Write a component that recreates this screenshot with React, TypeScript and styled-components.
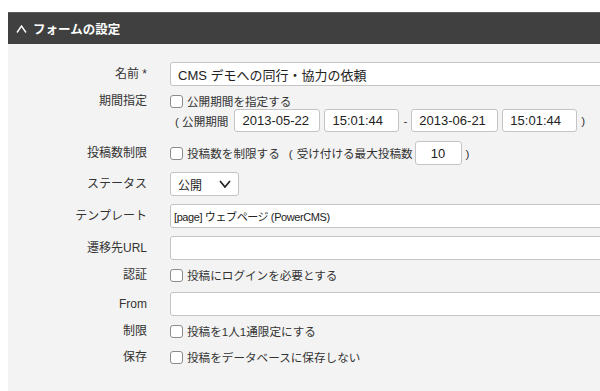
import React from "react";
import styled, { createGlobalStyle } from "styled-components";

const GlobalStyle = createGlobalStyle`
  html, body {
    margin: 0;
    padding: 0;
    background: #ffffff;
    overflow: hidden;
  }
  body {
    font-family: "Liberation Sans", "Noto Sans CJK JP", sans-serif;
    color: #333333;
  }
`;

const Page = styled.div`
  width: 100%;
  overflow: hidden;
  padding: 12px 0 0 8px;
  box-sizing: border-box;
`;

const Sheet = styled.div`
  width: 720px;
`;

const Header = styled.div`
  height: 32px;
  box-sizing: border-box;
  background: #404040;
  border-top: 1px solid #5a5a5a;
  color: #ffffff;
  display: flex;
  align-items: center;
  gap: 6px;
  padding-left: 8px;
  font-family: "Noto Sans CJK JP", sans-serif;
  font-weight: 700;
  font-size: 12.5px;
`;

const Caret = styled.svg`
  width: 11px;
  height: 8px;
  display: block;
`;

const Panel = styled.div`
  background: #f3f3f3;
  padding: 18px 0 40px;
  display: flex;
  flex-direction: column;
`;

const Row = styled.div<{ $top: number; $align?: string }>`
  display: grid;
  grid-template-columns: 139px 1fr;
  column-gap: 23px;
  align-items: ${(p) => p.$align ?? "center"};
  margin-top: ${(p) => p.$top}px;
`;

const Label = styled.div<{ $lh?: number }>`
  text-align: right;
  font-size: 12px;
  line-height: ${(p) => p.$lh ?? 16}px;
  color: #333;
`;

const Field = styled.div`
  display: flex;
  flex-direction: column;
  min-width: 0;
`;

const Line = styled.div<{ $h: number }>`
  display: flex;
  align-items: center;
  height: ${(p) => p.$h}px;
  font-size: 11.6px;
  color: #333;
  white-space: nowrap;
`;

const TextBox = styled.input<{ $w?: number; $h?: number; $center?: boolean; $fs?: number }>`
  box-sizing: border-box;
  width: ${(p) => (p.$w ? `${p.$w}px` : "100%")};
  height: ${(p) => p.$h ?? 24}px;
  border: 1px solid #c4c4c4;
  border-radius: 3px;
  background: #ffffff;
  padding: 0 ${(p) => (p.$center ? 0 : 7)}px;
  margin: 0;
  font-family: "Liberation Sans", "Noto Sans CJK JP", sans-serif;
  font-size: ${(p) => p.$fs ?? 13}px;
  color: #222;
  text-align: ${(p) => (p.$center ? "center" : "left")};
  outline: none;
  flex: none;
`;

const Check = styled.span`
  box-sizing: border-box;
  width: 13px;
  height: 13px;
  border: 1px solid #8c8c8c;
  border-radius: 3px;
  background: #ffffff;
  flex: none;
  margin-right: 4px;
`;

const Paren = styled.span<{ $ml?: number; $mr?: number }>`
  margin-left: ${(p) => p.$ml ?? 0}px;
  margin-right: ${(p) => p.$mr ?? 0}px;
`;

const DateLine = styled.div`
  display: flex;
  align-items: center;
  gap: 4px;
  height: 23px;
  font-size: 11.6px;
  color: #333;
  white-space: nowrap;
  padding-left: 5px;
`;

const DateLead = styled.span`
  margin-right: 2px;
`;

const Select = styled.div<{ $w?: number; $fs?: number; $pl?: number; $ls?: number }>`
  box-sizing: border-box;
  width: ${(p) => (p.$w ? `${p.$w}px` : "100%")};
  height: 24px;
  border: 1px solid #c4c4c4;
  border-radius: 3px;
  background: #ffffff;
  display: flex;
  align-items: center;
  justify-content: space-between;
  padding: 0 7px 0 ${(p) => p.$pl ?? 7}px;
  font-size: ${(p) => p.$fs ?? 12}px;
  letter-spacing: ${(p) => p.$ls ?? 0}px;
  color: #222;
  white-space: nowrap;
`;

const Chevron = styled.svg`
  width: 12px;
  height: 8px;
  display: block;
`;

function CheckLine({ text }: { text: string }) {
  return (
    <Line $h={18}>
      <Check />
      <span>{text}</span>
    </Line>
  );
}

export default function App() {
  return (
    <>
      <GlobalStyle />
      <Page>
        <Sheet>
          <Header>
            <Caret viewBox="0 0 11 8">
              <polyline points="1,7.5 5.5,1 10,7.5" fill="none" stroke="#fff" strokeWidth="1.4" />
            </Caret>
            <span>フォームの設定</span>
          </Header>
          <Panel>
            <Row $top={0}>
              <Label>名前 *</Label>
              <TextBox readOnly value="CMS デモへの同行・協力の依頼" />
            </Row>
            <Row $top={7} $align="start">
              <Label $lh={16}>期間指定</Label>
              <Field>
                <Line $h={16}>
                  <Check />
                  <span>公開期間を指定する</span>
                </Line>
                <DateLine>
                  <DateLead>( 公開期間</DateLead>
                  <TextBox readOnly value="2013-05-22" $w={86} $h={23} />
                  <TextBox readOnly value="15:01:44" $w={75} $h={23} />
                  <span>-</span>
                  <TextBox readOnly value="2013-06-21" $w={87} $h={23} />
                  <TextBox readOnly value="15:01:44" $w={75} $h={23} />
                  <span>)</span>
                </DateLine>
              </Field>
            </Row>
            <Row $top={9}>
              <Label>投稿数制限</Label>
              <Line $h={24}>
                <Check />
                <span>投稿数を制限する</span>
                <Paren $ml={9} $mr={4}>(</Paren>
                <span>受け付ける最大投稿数</span>
                <Paren $ml={2}>
                  <TextBox readOnly value="10" $w={47} $center />
                </Paren>
                <Paren $ml={4}>)</Paren>
              </Line>
            </Row>
            <Row $top={7}>
              <Label>ステータス</Label>
              <Select $w={69}>
                <span>公開</span>
                <Chevron viewBox="0 0 12 8">
                  <polyline points="1,1 6,7 11,1" fill="none" stroke="#222" strokeWidth="1.7" />
                </Chevron>
              </Select>
            </Row>
            <Row $top={8}>
              <Label>テンプレート</Label>
              <Select $fs={11} $pl={3} $ls={-0.4}>
                <span>[page] ウェブページ (PowerCMS)</span>
              </Select>
            </Row>
            <Row $top={8}>
              <Label>遷移先URL</Label>
              <TextBox readOnly value="" />
            </Row>
            <Row $top={6}>
              <Label>認証</Label>
              <CheckLine text="投稿にログインを必要とする" />
            </Row>
            <Row $top={8}>
              <Label>From</Label>
              <TextBox readOnly value="" />
            </Row>
            <Row $top={6}>
              <Label>制限</Label>
              <CheckLine text="投稿を1人1通限定にする" />
            </Row>
            <Row $top={8}>
              <Label>保存</Label>
              <CheckLine text="投稿をデータベースに保存しない" />
            </Row>
          </Panel>
        </Sheet>
      </Page>
    </>
  );
}
